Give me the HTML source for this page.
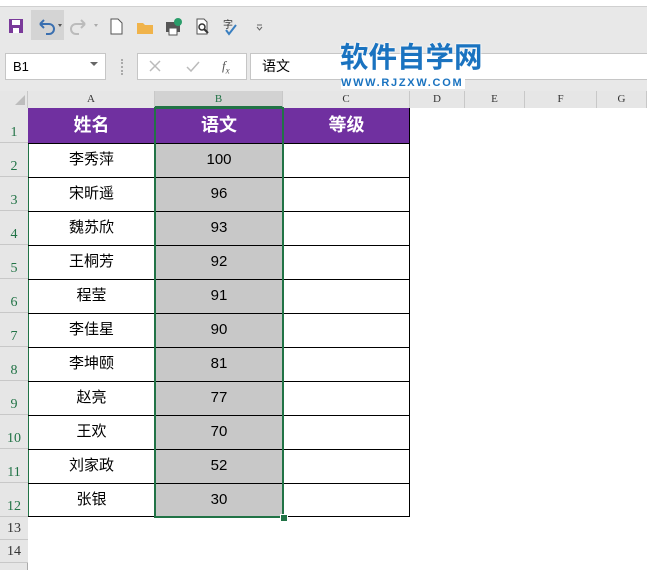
<!DOCTYPE html>
<html><head><meta charset="utf-8"><style>
body{margin:0;width:647px;height:570px;overflow:hidden;background:#e8e8e8;font-family:"Liberation Sans","Noto Sans CJK SC",sans-serif;position:relative}
.a{position:absolute}
.cell{position:absolute;box-sizing:border-box;text-align:center;font-size:15px;color:#000}
.rh{position:absolute;left:0;width:28px;background:#e6e6e6;border-bottom:1px solid #c8c8c8;box-sizing:border-box;font-size:14px;color:#333;text-align:center;font-family:"Liberation Serif",serif}
.ch{position:absolute;top:91px;height:17px;background:#e6e6e6;border-right:1px solid #c8c8c8;box-sizing:border-box;font-size:11px;text-align:center;line-height:17px;color:#333;font-family:"Liberation Serif",serif}
</style></head><body>
<div class="a" style="left:0;top:0;width:647px;height:6px;border-bottom:1px solid #d0d0d0;background:#fff"></div>
<svg class="a" style="left:0;top:8px" width="280" height="36">
<rect x="9" y="11" width="14" height="14" fill="#7a3a9a"/><rect x="12" y="12" width="8" height="5" fill="#fff"/><rect x="13" y="20" width="6" height="5" fill="#fff"/>
<rect x="31" y="2" width="33" height="30" fill="#d4d4d4"/>
<path d="M40 16 l4 -4 M40 16 l4 4 M40 16 h9 a5 5 0 0 1 0 10 h-3" stroke="#3a6fb0" stroke-width="2" fill="none"/>
<path d="M58 16 l2 3 l2 -3z" fill="#555"/>
<path d="M85 16 l-4 -4 M85 16 l-4 4 M85 16 h-9 a5 5 0 0 0 0 10 h3" stroke="#bbb" stroke-width="2" fill="none"/>
<path d="M94 16 l2 3 l2 -3z" fill="#aaa"/>
<path d="M111 11 h7 l4 4 v11 h-11z" fill="#fff" stroke="#555"/>
<path d="M137 15 h6 l2 2 h8 v9 h-16z" fill="#f0b34a"/>
<rect x="166" y="14" width="14" height="10" fill="#555"/><rect x="169" y="20" width="8" height="7" fill="#fff" stroke="#555"/><circle cx="178" cy="14" r="4" fill="#2a9d6a"/>
<path d="M197 11 h7 l3 3 v12 h-10z" fill="#fff" stroke="#555"/><circle cx="202" cy="19" r="3" fill="none" stroke="#333" stroke-width="1.5"/><path d="M204 21 l4 4" stroke="#333" stroke-width="2"/>
<text x="223" y="20" font-size="10" fill="#333">字</text><path d="M226 22 l3 4 l7 -9" stroke="#3a7fc0" stroke-width="2" fill="none"/>
<path d="M257 17 h5 M257 19 l2.5 3 l2.5 -3" stroke="#666" fill="none"/>
</svg>
<div class="a" style="left:5px;top:53px;width:101px;height:27px;background:#fff;border:1px solid #c6c6c6;box-sizing:border-box;font-size:13px;line-height:25px;padding-left:7px">B1</div>
<svg class="a" style="left:90px;top:62px" width="10" height="6"><path d="M0 0h8l-4 4z" fill="#666"/></svg>
<div class="a" style="left:121px;top:59px;width:2px;height:16px;border-left:2px dotted #aaa"></div>
<div class="a" style="left:137px;top:53px;width:110px;height:27px;background:#fff;border:1px solid #c6c6c6;box-sizing:border-box"></div>
<svg class="a" style="left:147px;top:59px" width="90" height="16">
<path d="M3 2 l10 10 M13 2 l-10 10" stroke="#bbb" stroke-width="1.5"/>
<path d="M40 8 l4 4 l8 -9" stroke="#bbb" stroke-width="1.5" fill="none"/>
</svg>
<div class="a" style="left:222px;top:58px;font-size:13px;color:#555;font-style:italic;font-family:'Liberation Serif',serif">f<sub style="font-size:9px">x</sub></div>
<div class="a" style="left:250px;top:53px;width:397px;height:27px;background:#fff;border:1px solid #c6c6c6;border-right:none;box-sizing:border-box;font-size:14px;line-height:25px;padding-left:11px">语文</div>
<div class="a" style="left:340px;top:43px;font-size:28.5px;font-weight:bold;color:#1a73c0;letter-spacing:0px;line-height:31px;text-shadow:0 0 2px #fff,0 0 2px #fff">软件自学网</div>
<div class="a" style="left:341px;top:78px;font-size:11px;font-weight:bold;color:#1a73c0;letter-spacing:1.7px;line-height:11px;background:#fff;padding-right:2px">WWW.RJZXW.COM</div>
<div class="a" style="left:0;top:91px;width:28px;height:17px;background:#e6e6e6;border-right:1px solid #c8c8c8;box-sizing:border-box"></div>
<svg class="a" style="left:15px;top:95px" width="11" height="11"><path d="M10 0v10h-10z" fill="#bdbdbd"/></svg>
<div class="ch" style="left:28px;width:127px">A</div>
<div class="ch" style="left:155px;width:128px;background:#d2d2d2;color:#217346;border-bottom:2px solid #217346">B</div>
<div class="ch" style="left:283px;width:127px">C</div>
<div class="ch" style="left:410px;width:55px">D</div>
<div class="ch" style="left:465px;width:60px">E</div>
<div class="ch" style="left:525px;width:72px">F</div>
<div class="ch" style="left:597px;width:50px">G</div>
<div class="a" style="left:0;top:108px;width:647px;height:462px;background:#fff"></div>
<div class="a" style="left:0;top:108px;width:28px;height:462px;background:#e6e6e6;border-right:1px solid #aaa;box-sizing:border-box"></div>
<div class="a" style="left:27px;top:108px;width:2px;height:409px;background:#217346"></div>
<div class="cell" style="left:28px;top:108px;width:382px;height:35px;background:#7030a0"></div>
<div class="cell" style="left:28px;top:108px;width:127px;height:35px;line-height:35px;color:#fff;font-weight:bold;font-size:18px">姓名</div>
<div class="cell" style="left:155px;top:108px;width:128px;height:35px;line-height:35px;color:#fff;font-weight:bold;font-size:18px">语文</div>
<div class="cell" style="left:283px;top:108px;width:127px;height:35px;line-height:35px;color:#fff;font-weight:bold;font-size:18px">等级</div>
<div class="rh" style="top:108px;height:35px;line-height:50px;color:#217346">1</div>
<div id="rows"></div>
<script>
var d=[["李秀萍",100],["宋昕遥",96],["魏苏欣",93],["王桐芳",92],["程莹",91],["李佳星",90],["李坤颐",81],["赵亮",77],["王欢",70],["刘家政",52],["张银",30]];
var h="";
h+='<div class="a" style="left:155px;top:143px;width:128px;height:374px;background:#c8c8c8"></div>';
for(var i=0;i<11;i++){var t=143+i*34;
h+='<div class="a" style="left:28px;top:'+t+'px;width:382px;height:1px;background:#000"></div>';
h+='<div class="cell" style="left:28px;top:'+t+'px;width:127px;height:34px;line-height:34px">'+d[i][0]+'</div>';
h+='<div class="cell" style="left:155px;top:'+t+'px;width:128px;height:34px;line-height:34px">'+d[i][1]+'</div>';
h+='<div class="rh" style="top:'+t+'px;height:34px;line-height:48px;color:#217346">'+(i+2)+'</div>';}
h+='<div class="a" style="left:28px;top:516px;width:382px;height:1px;background:#000"></div>';
h+='<div class="a" style="left:155px;top:143px;width:1px;height:374px;background:#000"></div>';
h+='<div class="a" style="left:283px;top:143px;width:1px;height:374px;background:#000"></div>';
h+='<div class="a" style="left:409px;top:108px;width:1px;height:409px;background:#000"></div>';
h+='<div class="rh" style="top:517px;height:23px;line-height:23px">13</div>';
h+='<div class="rh" style="top:540px;height:23px;line-height:23px">14</div>';
h+='<div class="a" style="left:154px;top:107px;width:130px;height:411px;border:2px solid #217346;box-sizing:border-box"></div>';
h+='<div class="a" style="left:280px;top:514px;width:6px;height:6px;background:#217346;border:1px solid #fff"></div>';
document.getElementById("rows").innerHTML=h;
</script>
</body></html>
